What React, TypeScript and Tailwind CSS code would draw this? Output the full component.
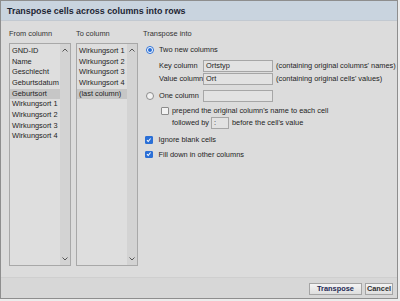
import React from 'react';

const fromItems = ['GND-ID', 'Name', 'Geschlecht', 'Geburtsdatum', 'Geburtsort', 'Wirkungsort 1', 'Wirkungsort 2', 'Wirkungsort 3', 'Wirkungsort 4'];
const toItems = ['Wirkungsort 1', 'Wirkungsort 2', 'Wirkungsort 3', 'Wirkungsort 4', '(last column)'];

const Chevron = ({ up }: { up?: boolean }) => (
  <svg width="6" height="4" viewBox="0 0 6 4" className="block">
    <polyline
      points={up ? '0.5,3.5 3,1 5.5,3.5' : '0.5,0.5 3,3 5.5,0.5'}
      fill="none"
      stroke="#555"
      strokeWidth="1"
    />
  </svg>
);

const ListBox = ({ items, selected }: { items: string[]; selected: string }) => (
  <div className="flex h-[223px] w-[62px] border border-[#a8a8a8] bg-[#dedede]">
    <div className="flex-1 pt-[2px]">
      {items.map((it) => (
        <div
          key={it}
          className={`h-[10.67px] pl-[2px] leading-[10.67px] whitespace-nowrap ${
            it === selected ? 'bg-[#c6c6c6]' : ''
          }`}
        >
          {it}
        </div>
      ))}
    </div>
    <div className="flex w-[10px] flex-col items-center justify-between bg-[#d3d3d3] py-[4px]">
      <Chevron up />
      <Chevron />
    </div>
  </div>
);

const Radio = ({ checked }: { checked?: boolean }) => (
  <span
    className={`flex h-[8px] w-[8px] shrink-0 items-center justify-center rounded-full border ${
      checked ? 'border-[#2a6fd6] bg-white' : 'border-[#8c8c8c] bg-[#f2f2f2]'
    }`}
  >
    {checked && <span className="h-[4px] w-[4px] rounded-full bg-[#2a6fd6]" />}
  </span>
);

const Check = ({ checked }: { checked?: boolean }) => (
  <span
    className={`flex h-[7.5px] w-[7.5px] shrink-0 items-center justify-center rounded-[1px] border ${
      checked ? 'border-[#2a6fd6] bg-[#2a6fd6]' : 'border-[#8c8c8c] bg-[#f2f2f2]'
    }`}
  >
    {checked && (
      <svg width="6" height="6" viewBox="0 0 6 6" className="block">
        <polyline points="1,3.2 2.4,4.6 5,1.4" fill="none" stroke="white" strokeWidth="1.1" />
      </svg>
    )}
  </span>
);

const Field = ({ value, w }: { value?: string; w: string }) => (
  <span className={`block h-[11.5px] ${w} border border-[#a6a6a6] bg-[#e2e2e2] pl-[2px] leading-[10px]`}>
    {value}
  </span>
);

export default function App() {
  return (
    <div
      className="h-[301px] w-[400px] bg-[#ececec] text-[7.4px] text-[#232323]"
      style={{ fontFamily: '"Liberation Sans", Arial, sans-serif' }}
    >
      <div className="flex h-[299px] w-[398px] flex-col border border-[#8e8e8e] bg-[#dcdcdc]">
        <div className="h-[20px] border-b border-[#c2c9d1] bg-[#c9d4df] pl-[6px] text-[8.9px] font-bold leading-[20px] text-[#1c2433]">
          Transpose cells across columns into rows
        </div>

        <div className="flex flex-1 gap-[5px] pl-[8px] pt-[8px]">
          <div>
            <div className="mb-[4px] h-[10px] leading-[10px] text-[#333]">From column</div>
            <ListBox items={fromItems} selected="Geburtsort" />
          </div>
          <div>
            <div className="mb-[4px] h-[10px] leading-[10px] text-[#333]">To column</div>
            <ListBox items={toItems} selected="(last column)" />
          </div>
          <div className="flex-1">
            <div className="h-[10px] leading-[10px] text-[#333]">Transpose into</div>

            <div className="mt-[5px] flex h-[12px] items-center gap-[5px] pl-[3px]">
              <Radio checked />
              <span>Two new columns</span>
            </div>

            <div className="mt-[4px] grid grid-cols-[44px_70px_auto] items-center gap-y-[1.8px] pl-[16px]">
              <span className="whitespace-nowrap">Key column</span>
              <Field value="Ortstyp" w="w-[70px]" />
              <span className="pl-[3px] whitespace-nowrap">(containing original columns' names)</span>
              <span className="whitespace-nowrap">Value column</span>
              <Field value="Ort" w="w-[70px]" />
              <span className="pl-[3px] whitespace-nowrap">(containing original cells' values)</span>
            </div>

            <div className="mt-[5px] flex h-[12px] items-center gap-[5px] pl-[3px]">
              <Radio />
              <span>One column</span>
              <span className="-ml-[1px]">
                <Field w="w-[70px]" />
              </span>
            </div>

            <div className="mt-[4px] flex h-[10px] items-center gap-[3.5px] pl-[18px]">
              <Check />
              <span>prepend the original column's name to each cell</span>
            </div>
            <div className="mt-[1px] flex h-[12px] items-center gap-[2px] pl-[29px]">
              <span>followed by</span>
              <Field value=":" w="w-[18px]" />
              <span className="ml-[1px]">before the cell's value</span>
            </div>

            <div className="mt-[6px] flex h-[10px] items-center gap-[6px] pl-[2px]">
              <Check checked />
              <span>Ignore blank cells</span>
            </div>
            <div className="mt-[4.5px] flex h-[10px] items-center gap-[6px] pl-[2px]">
              <Check checked />
              <span>Fill down in other columns</span>
            </div>
          </div>
        </div>

        <div className="flex h-[21px] items-start justify-end gap-[3px] border-t border-[#cfcfcf] bg-[#d7d7d7] pr-[4px] pt-[5px]">
          <button className="h-[12px] w-[53px] border border-[#a4a4a4] bg-gradient-to-b from-[#f4f4f4] to-[#dedede] text-[7.4px] font-bold leading-[10px] text-[#262b55]">
            Transpose
          </button>
          <button className="h-[12px] w-[28px] border border-[#a4a4a4] bg-gradient-to-b from-[#f4f4f4] to-[#dedede] text-[7.4px] font-semibold leading-[10px] text-[#333]">
            Cancel
          </button>
        </div>
      </div>
    </div>
  );
}
